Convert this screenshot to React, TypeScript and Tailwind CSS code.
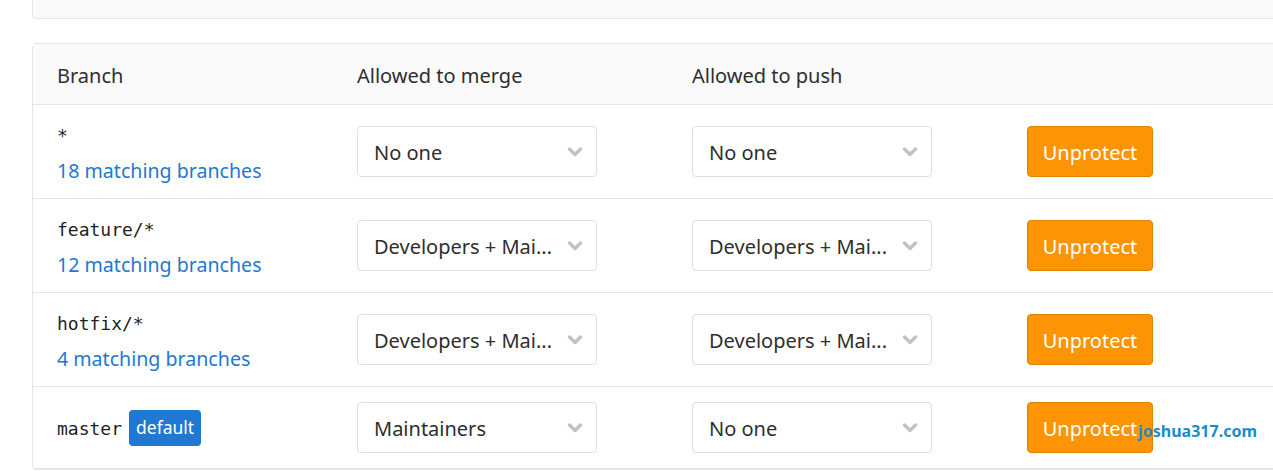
import React from "react";

const Chevron = () => (
  <svg width="16" height="10" viewBox="0 0 16 10" className="shrink-0">
    <path d="M2.5 2 L8 7.5 L13.5 2" fill="none" stroke="#c2c2c2" strokeWidth="3.4" strokeLinecap="round" strokeLinejoin="round" />
  </svg>
);

const Select = ({ value }: { value: string }) => (
  <div className="w-[240px] h-[51px] border border-[#e0e0e0] rounded-[4px] bg-white flex items-center justify-between pl-[16px] pr-[13px]">
    <span className="text-[20px] text-[#2e2e2e] whitespace-nowrap pt-[2px]">{value}</span>
    <Chevron />
  </div>
);

const Button = () => (
  <div className="w-[126px] h-[51px] rounded-[4px] bg-[#fc9403] border border-[#e08300] text-white text-[20px] flex items-center justify-center pt-[2px]">
    Unprotect
  </div>
);

type Row = { name: string; link?: string; def?: boolean; merge: string; push: string };

const rows: Row[] = [
  { name: "*", link: "18 matching branches", merge: "No one", push: "No one" },
  { name: "feature/*", link: "12 matching branches", merge: "Developers + Mai...", push: "Developers + Mai..." },
  { name: "hotfix/*", link: "4 matching branches", merge: "Developers + Mai...", push: "Developers + Mai..." },
  { name: "master", def: true, merge: "Maintainers", push: "No one" },
];

export default function App() {
  return (
    <div
      className="relative w-[1273px] h-[471px] overflow-hidden bg-white"
      style={{ fontFamily: '"Noto Sans", "Open Sans", sans-serif' }}
    >
      <div className="ml-[32px] w-[1300px] h-[19px] border-x border-b border-[#e5e5e5] rounded-b-[4px] bg-[#fafafa]" />
      <div className="ml-[32px] mt-[24px] w-[1300px] border border-[#e5e5e5] rounded-[4px]">
        <div className="h-[61px] bg-[#fafafa] border-b border-[#e5e5e5] flex items-center pl-[24px] pt-[3px] text-[20px] text-[#2e2e2e]">
          <div className="w-[300px]">Branch</div>
          <div className="w-[335px]">Allowed to merge</div>
          <div className="w-[335px]">Allowed to push</div>
        </div>
        {rows.map((r, i) => {
          const last = i === rows.length - 1;
          return (
            <div
              key={i}
              className={`flex items-center pl-[24px] border-b border-[#e5e5e5] ${last ? "h-[82px]" : "h-[94px]"}`}
            >
              {last ? (
                <div className="w-[300px] flex items-center">
                  <span
                    className="text-[18px] text-[#1f1f1f] leading-[28px] pt-[2px]"
                    style={{ fontFamily: '"DejaVu Sans Mono", "Liberation Mono", monospace' }}
                  >
                    {r.name}
                  </span>
                  <span className="ml-[7px] bg-[#1f78d1] text-white text-[17.5px] rounded-[4px] px-[7px] h-[36px] flex items-center">
                    default
                  </span>
                </div>
              ) : (
                <div className="w-[300px] self-start pt-[17px] flex flex-col">
                  <div
                    className="text-[18px] text-[#1f1f1f] leading-[28px]"
                    style={{ fontFamily: '"DejaVu Sans Mono", "Liberation Mono", monospace' }}
                  >
                    {r.name}
                  </div>
                  <div className="mt-[4px] text-[19.6px] text-[#1f78d1] leading-[34px]">{r.link}</div>
                </div>
              )}
              <div className="w-[335px]">
                <Select value={r.merge} />
              </div>
              <div className="w-[335px]">
                <Select value={r.push} />
              </div>
              <Button />
            </div>
          );
        })}
      </div>
      <div className="absolute left-[1138px] top-[421px] text-[16px] font-bold text-[#1a8cc8] leading-[20px]">
        joshua317.com
      </div>
    </div>
  );
}
